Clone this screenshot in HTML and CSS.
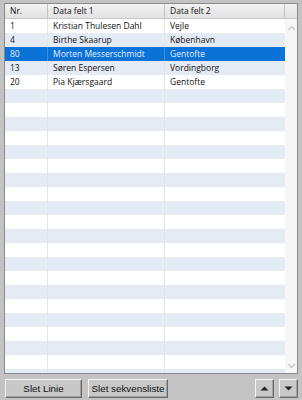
FILE: index.html
```html
<!DOCTYPE html>
<html lang="da">
<head>
  <meta charset="UTF-8" />
  <title>Sekvensliste</title>
  <link rel="stylesheet" href="styles.css">
</head>
<body>
  <div class="frame">
    <div class="list">
      <div class="head">
        <div class="c1">Nr.</div>
        <div class="c2">Data felt 1</div>
        <div class="c3">Data felt 2</div>
        <div class="c4"></div>
      </div>
      <div class="body">
        <div class="rows" id="rows"></div>
        <div class="scroll">
          <svg class="chev" width="9" height="6" viewBox="0 0 9 6"><path d="M1 5 L4.5 1.5 L8 5" fill="none" stroke="#c8c8c8" stroke-width="1.3"/></svg>
          <svg class="chev" width="9" height="6" viewBox="0 0 9 6"><path d="M1 1 L4.5 4.5 L8 1" fill="none" stroke="#c8c8c8" stroke-width="1.3"/></svg>
        </div>
      </div>
    </div>

    <div class="bar">
      <button class="btn wide1">Slet Linie</button>
      <button class="btn wide2">Slet sekvensliste</button>
      <div class="spacer"></div>
      <button class="btn arrow">
        <svg width="9" height="5" viewBox="0 0 9 5"><path d="M0.5 4.5 L4.5 0.5 L8.5 4.5 Z" fill="#222"/></svg>
      </button>
      <button class="btn arrow">
        <svg width="9" height="5" viewBox="0 0 9 5"><path d="M0.5 0.5 L8.5 0.5 L4.5 4.5 Z" fill="#222"/></svg>
      </button>
    </div>
  </div>

  <script>
    const data = [
      ["1", "Kristian Thulesen Dahl", "Vejle"],
      ["4", "Birthe Skaarup", "København"],
      ["80", "Morten Messerschmidt", "Gentofte"],
      ["13", "Søren Espersen", "Vordingborg"],
      ["20", "Pia Kjærsgaard", "Gentofte"]
    ];
    const selected = 2;
    let html = "";
    for (let i = 0; i < 26; i++) {
      const d = data[i] || ["", "", ""];
      const cls = i === selected ? "row sel" : (i % 2 ? "row alt" : "row");
      html += `<div class="${cls}"><div class="c1">${d[0]}</div><div class="c2">${d[1]}</div><div class="c3">${d[2]}</div></div>`;
    }
    document.getElementById("rows").innerHTML = html;
  </script>
</body>
</html>
```

FILE: styles.css
```css
html, body {
  margin: 0;
  background: #c3c3c3;
}
body {
  font-family: "Open Sans", "Liberation Sans", sans-serif;
  font-size: 8.5px;
  color: #111;
}
.frame {
  width: 302px;
  height: 400px;
  padding: 3px 4px 0 4px;
  box-sizing: border-box;
  display: flex;
  flex-direction: column;
}
.list {
  height: 369px;
  border: 1px solid #8a8a8a;
  background: #fff;
  display: flex;
  flex-direction: column;
  overflow: hidden;
}
.head {
  height: 14px;
  display: flex;
  background: linear-gradient(#f2f2f2, #e2e2e2);
  border-bottom: 1px solid #c8c8c8;
  flex-shrink: 0;
}
.head > div {
  line-height: 14px;
  padding-left: 5px;
  border-right: 1px solid #c4c4c4;
  box-sizing: border-box;
}
.head .c4 {
  border-right: none;
}
.c1 { width: 43px; }
.c2 { width: 117px; }
.c3 { width: 120px; }
.c4 { flex: 1; }
.body {
  flex: 1;
  display: flex;
  min-height: 0;
}
.rows {
  width: 280px;
  overflow: hidden;
}
.row {
  height: 14px;
  display: flex;
  background: #fff;
}
.row.alt {
  background: #e5ebf5;
}
.row.sel {
  background: #0b72d8;
  color: #e4eefa;
}
.row > div {
  line-height: 14px;
  padding-left: 5px;
  box-sizing: border-box;
  border-right: 1px solid #e4e4e4;
  white-space: nowrap;
  overflow: hidden;
}
.row.sel > div {
  border-right-color: #3a8de0;
}
.row .c3 {
  border-right: none;
}
.scroll {
  flex: 1;
  background: #f6f6f6;
  display: flex;
  flex-direction: column;
  justify-content: space-between;
  align-items: center;
  padding: 6px 0 4px;
}
.bar {
  display: flex;
  align-items: center;
  gap: 6px;
  margin-top: 5px;
}
.spacer {
  flex: 1;
}
.btn {
  height: 19px;
  font-family: "Liberation Sans", Arial, sans-serif;
  font-size: 9.8px;
  white-space: nowrap;
  color: #111;
  background: #c8c8c8;
  border: 1px solid;
  border-color: #f4f4f4 #6a6a6a #6a6a6a #f4f4f4;
  box-shadow: inset -1px -1px 0 #a0a0a0;
  padding: 0;
  display: flex;
  align-items: center;
  justify-content: center;
}
.wide1 { width: 77px; margin-left: 1px; }
.wide2 { width: 80px; }
.arrow {
  width: 19px;
}
.arrow + .arrow {
  margin-left: -1px;
}
```
